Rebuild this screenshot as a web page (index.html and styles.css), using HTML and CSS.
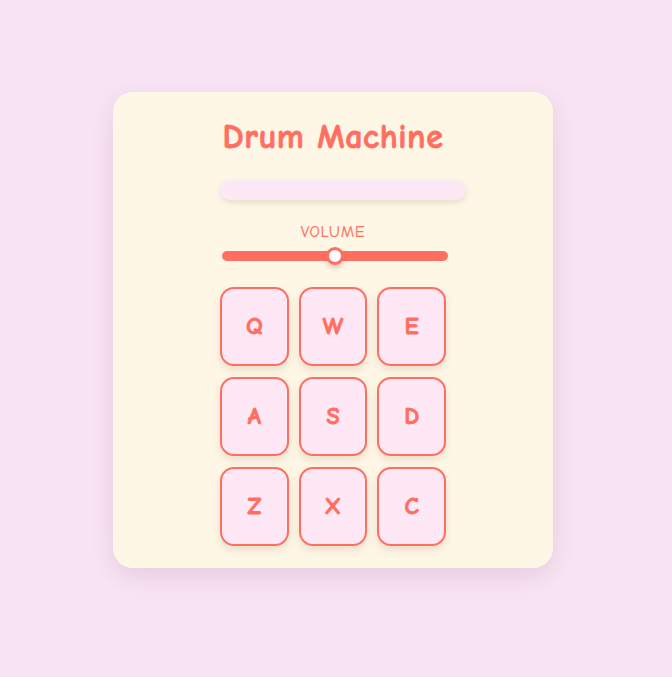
FILE: index.html
```html
<!DOCTYPE html>
<html lang="en">
<head>
<meta charset="utf-8">
<title>Drum Machine</title>
<link rel="stylesheet" href="styles.css">
</head>
<body>
<main class="machine">
  <h1 class="title">Drum Machine</h1>
  <div class="panel">
    <div class="display"></div>
    <label class="volume-label" for="volume">VOLUME</label>
    <input class="volume" id="volume" type="range" min="0" max="100" value="50">
    <div class="pads">
      <button class="pad">Q</button>
      <button class="pad">W</button>
      <button class="pad">E</button>
      <button class="pad">A</button>
      <button class="pad">S</button>
      <button class="pad">D</button>
      <button class="pad">Z</button>
      <button class="pad">X</button>
      <button class="pad">C</button>
    </div>
  </div>
</main>
</body>
</html>
```

FILE: styles.css
```css
* { box-sizing: border-box; }
html, body { margin: 0; }
body {
  background: #f8e4f4;
  font-family: "Comic Sans MS", "Comic Neue", "Open Sans", sans-serif;
  min-height: 100vh;
  display: flex;
  justify-content: center;
  align-items: center;
  padding: 0 6px 18px 0;
}
.machine {
  width: 440px;
  height: 476px;
  background: #fff7e6;
  border-radius: 20px;
  box-shadow: 0 8px 24px rgba(170, 120, 150, 0.22);
  padding: 20px 0 20px;
  display: flex;
  flex-direction: column;
  align-items: center;
}
.title {
  margin: 0;
  height: 48px;
  line-height: 50px;
  font-size: 34px;
  font-weight: 700;
  letter-spacing: 0.6px;
  -webkit-text-stroke: 0.8px #ff6f61;
  color: #ff6f61;
  text-align: center;
}
.panel {
  width: 226px;
  display: flex;
  flex-direction: column;
  align-items: center;
}
.display {
  box-sizing: content-box;
  align-self: flex-start;
  width: 226px;
  height: 20px;
  padding: 0 10px;
  margin-top: 20px;
  background: #fde8f5;
  border-radius: 10px;
  box-shadow: 0 3px 6px rgba(150, 120, 100, 0.2);
}
.volume-label {
  margin-top: 22px;
  font-size: 16px;
  line-height: 20px;
  letter-spacing: 0.8px;
  -webkit-text-stroke: 0.2px #ff6f61;
  color: #ff6f61;
}
.volume {
  -webkit-appearance: none;
  appearance: none;
  width: 226px;
  height: 10px;
  margin: 9px 0 0 4px;
  border-radius: 5px;
  background: #ff6f61;
  outline: none;
}
.volume::-webkit-slider-thumb {
  -webkit-appearance: none;
  appearance: none;
  width: 18px;
  height: 18px;
  border-radius: 50%;
  background: #ffffff;
  border: 3px solid #ff6f61;
  box-shadow: 0 3px 5px rgba(120, 90, 80, 0.3);
}
.pads {
  width: 226px;
  margin-top: 26px;
  display: grid;
  grid-template-columns: repeat(3, 1fr);
  grid-auto-rows: 79px;
  gap: 11px 10px;
}
.pad {
  background: #ffe8f5;
  border: 2px solid #ff6f61;
  border-radius: 14px;
  color: #ff6f61;
  font-family: inherit;
  font-size: 24px;
  font-weight: 700;
  -webkit-text-stroke: 0.8px #ff6f61;
  box-shadow: 0 4px 8px rgba(150, 120, 100, 0.2);
  padding: 0;
}
```
